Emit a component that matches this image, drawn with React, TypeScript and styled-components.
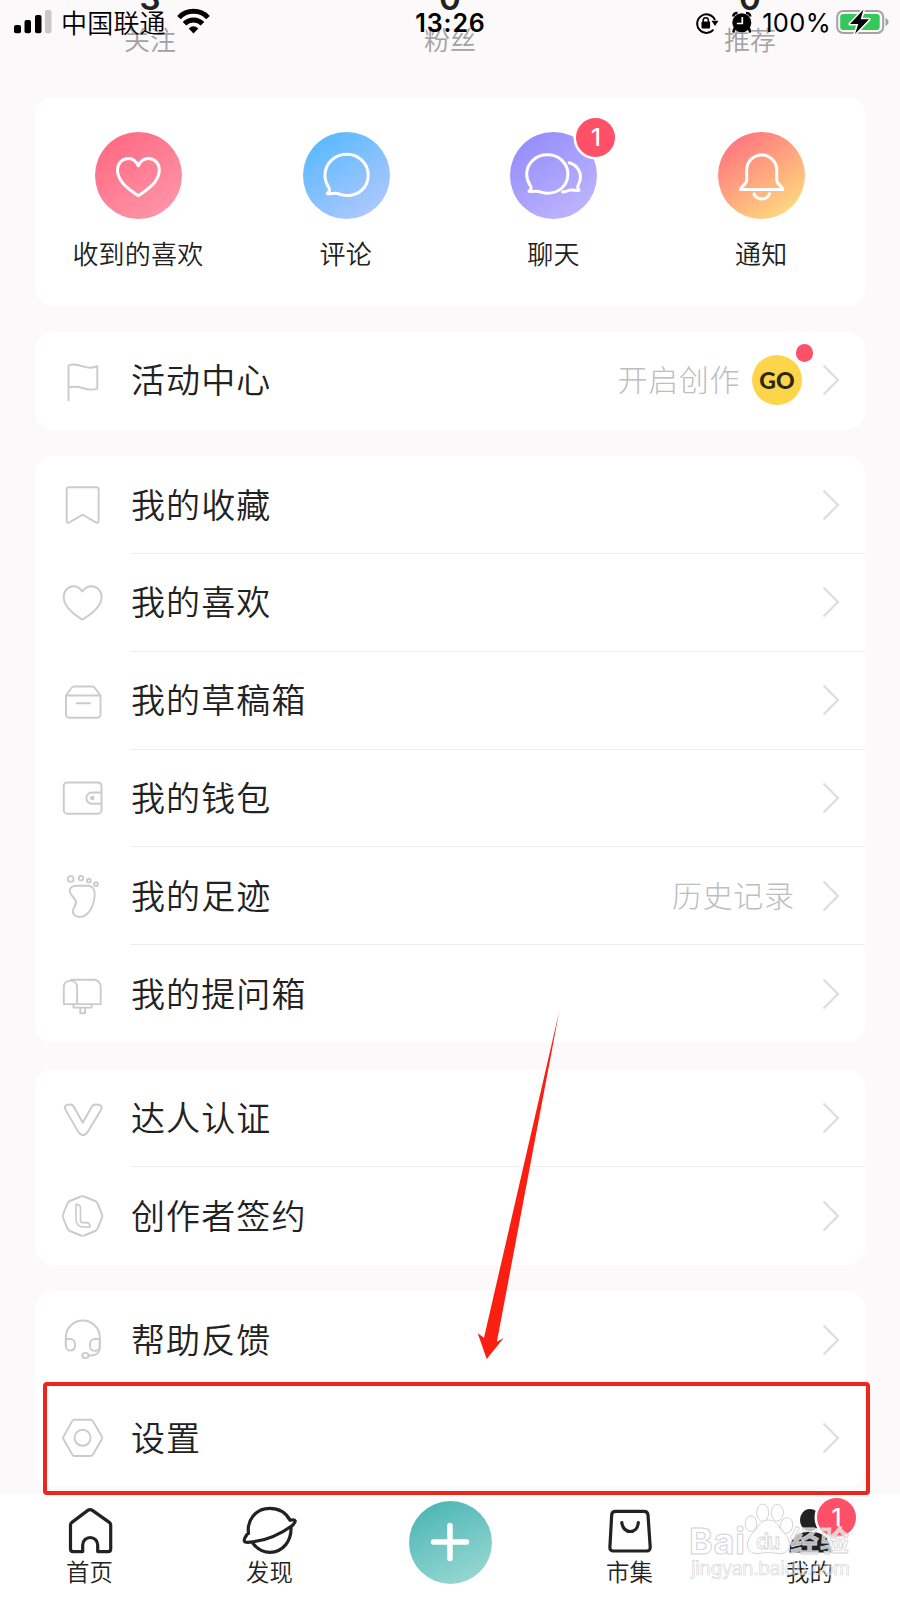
import React from 'react';
import styled, { createGlobalStyle } from 'styled-components';

const GlobalStyle = createGlobalStyle`
  * { box-sizing: border-box; }
  body {
    margin: 0;
    background: #fbf9fa;
    font-family: Inter, 'Noto Sans CJK SC', sans-serif;
    color: #222;
  }
`;

const Screen = styled.div`
  position: relative;
  display: flex;
  flex-direction: column;
  width: 900px;
  height: 1600px;
  overflow: hidden;
  background: #fbf9fa;
`;

/* ---------- Status bar ---------- */

const StatusBar = styled.header`
  position: absolute;
  inset: 0 0 auto 0;
  z-index: 2;
  display: grid;
  grid-template-columns: 1fr auto 1fr;
  align-items: center;
  height: 46px;
  padding: 0 11px 0 14px;
  color: #000;
`;

const StatusGroup = styled.div<{ $end?: boolean }>`
  display: flex;
  align-items: center;
  justify-content: ${(p) => (p.$end ? 'flex-end' : 'flex-start')};
  height: 46px;
`;

const Carrier = styled.span`
  margin: 0 11px 0 9px;
  padding-bottom: 2px;
  font: 350 26px/44px 'Noto Sans CJK SC', sans-serif;
  letter-spacing: 0.2px;
`;

const Clock = styled.span`
  margin-right: 2px;
  font-size: 25px;
  font-weight: 600;
  line-height: 46px;
  letter-spacing: 0.9px;
`;

const BatteryText = styled.span`
  margin: 0 5px 0 9px;
  font-size: 25.500px;
  line-height: 46px;
  letter-spacing: 0.3px;
`;

const RotationIcon = styled.svg`
  margin-right: 12px;
`;

/* ---------- Profile counters ---------- */

const Counters = styled.section`
  display: grid;
  grid-template-columns: repeat(3, 300px);
  flex: none;
  height: 97px;
  overflow: hidden;
`;

const Counter = styled.div`
  display: flex;
  flex-direction: column;
  align-items: center;
  margin-top: -22px;
`;

const CounterValue = styled.strong`
  flex: none;
  font-size: 33px;
  font-weight: 600;
  line-height: 41px;
`;

const CounterLabel = styled.span`
  font: 350 26px/40px 'Noto Sans CJK SC', sans-serif;
  color: #a3a2a3;
`;

/* ---------- Cards ---------- */

const Content = styled.main`
  display: flex;
  flex-direction: column;
  gap: 26.4px;
  flex: none;
  height: 1396.5px;
  padding: 0 35px;
  overflow: hidden;
`;

const Card = styled.section`
  flex: none;
  border-radius: 18px;
  background: #fff;
`;

const ShortcutCard = styled(Card)`
  display: grid;
  grid-template-columns: repeat(4, 207.8px);
  height: 208.6px;
  padding-top: 34.5px;
`;

const Shortcut = styled.div`
  display: flex;
  flex-direction: column;
  align-items: center;
  margin-left: -1px;
`;

const ShortcutDisc = styled.div<{ $from: string; $to: string }>`
  position: relative;
  width: 87px;
  height: 87px;
  border-radius: 50%;
  background: linear-gradient(145deg, ${(p) => p.$from} 12%, ${(p) => p.$to} 88%);
`;

const ShortcutLabel = styled.span`
  margin: 14px 1px 0 0;
  font: 350 26px/40px 'Noto Sans CJK SC', sans-serif;
  letter-spacing: 0.2px;
`;

const Badge = styled.span<{ $top: number; $left: number }>`
  position: absolute;
  top: ${(p) => p.$top}px;
  left: ${(p) => p.$left}px;
  width: 39px;
  height: 39px;
  border-radius: 50%;
  background: #fe5067;
  box-shadow: 0 0 0 2.5px #fff;
  color: #fff;
  font-size: 24px;
  font-weight: 500;
  line-height: 39px;
  text-align: center;
`;

const Row = styled.div`
  display: flex;
  height: 97.8px;
  padding-left: 25px;
`;

const RowIcon = styled.svg`
  flex: none;
  align-self: center;
  width: 44px;
  height: 44px;
  margin-right: 27px;
  fill: none;
  stroke: #cbcbcb;
  stroke-width: 1.9;
  stroke-linejoin: round;
`;

const RowBody = styled.div<{ $line: boolean }>`
  display: flex;
  align-items: center;
  flex: 1;
  padding-right: 25.500px;
  border-bottom: 1px solid ${(p) => (p.$line ? '#ededed' : 'transparent')};
`;

const RowLabel = styled.span`
  flex: 1;
  padding-bottom: 2px;
  font: 350 34px/50px 'Noto Sans CJK SC', sans-serif;
  letter-spacing: 1.1px;
`;

const RowNote = styled.span<{ $gap: number }>`
  margin-right: ${(p) => p.$gap}px;
  padding-bottom: 4px;
  font: 300 30px/44px 'Noto Sans CJK SC', sans-serif;
  letter-spacing: 0.6px;
  color: #bebebe;
`;

const GoBadge = styled.span`
  position: relative;
  width: 50px;
  height: 50px;
  margin-right: 19.500px;
  border-radius: 50%;
  background: #fdd54a;
  color: #2c2812;
  font: 900 23px/51px Lato, sans-serif;
  text-align: center;
`;

const Dot = styled.i`
  position: absolute;
  top: -11px;
  left: 43.5px;
  width: 17.5px;
  height: 17.5px;
  border-radius: 50%;
  background: #fe5067;
`;

/* ---------- Tab bar ---------- */

const TabBar = styled.nav`
  display: grid;
  grid-template-columns: repeat(5, 180px);
  flex: 1;
  background: #fff;
`;

const Tab = styled.div`
  position: relative;
  display: flex;
  flex-direction: column;
  align-items: center;
  padding: 11.5px 1px 0 0;
`;

const TabIcon = styled.svg`
  width: 56px;
  height: 52px;
  fill: none;
  stroke: #222;
  stroke-width: 3.2;
  stroke-linecap: round;
  stroke-linejoin: round;
`;

const TabLabel = styled.span`
  margin-top: -2px;
  font: 350 23.4px/32px 'Noto Sans CJK SC', sans-serif;
`;

const AddButton = styled.div`
  display: grid;
  place-items: center;
  align-self: start;
  justify-self: center;
  width: 83px;
  height: 83px;
  margin-top: 7px;
  border-radius: 50%;
  background: linear-gradient(155deg, #4cb6b5 8%, #97d7d2 90%);
`;

/* ---------- Annotations ---------- */

const Highlight = styled.div`
  position: absolute;
  top: 1381.5px;
  left: 42.5px;
  width: 827px;
  height: 113.5px;
  border: 4px solid #ee251a;
  border-radius: 4px;
`;

const Arrow = styled.svg`
  position: absolute;
  top: 1010px;
  left: 476px;
`;

const Watermark = styled.svg`
  position: absolute;
  top: 1498px;
  left: 684px;
`;

/* ---------- Data ---------- */

const HEART = 'M22.4 10.6C20 7 17 5.3 13.7 5.3 8 5.3 3.7 10 3.7 16c0 9 7.3 15.8 18.7 22.6C33.7 31.8 41.6 25 41.6 16c0-6-4.4-10.7-10.1-10.7-3.8 0-6.8 1.7-9.1 5.3Z';

const icons: Record<string, React.ReactNode> = {
  flag: <path d="M8.5 42.2V6.6c5-2.3 9.5-1 14.4.7s9.400 2.300 14.400-.2V29.600c-5 1.800-9.400 1.200-14.400-.5s-9.400-2-14.400-.5" />,
  bookmark: <path d="M8.800 4.200H36.600a2 2 0 0 1 2 2V38c0 1.700-1.300 2.300-2.700 1.400L22.600 31.700 9.400 39.400c-1.400.9-2.700.3-2.700-1.400V6.200a2 2 0 0 1 2.100-2Z" />,
  heart: <path d={HEART} />,
  drafts: (
    <>
      <path d="M6 16.500 11.500 9c.8-1 1.500-1.500 2.700-1.500H32.200c1.200 0 2 .5 2.700 1.500L40.500 16.500V35.300a3.500 3.500 0 0 1-3.500 3.500H9.500A3.500 3.500 0 0 1 6 35.300ZM6 16.500H40.500" />
      <path d="M16.500 24.200H30" strokeLinecap="round" />
    </>
  ),
  wallet: (
    <>
      <rect x="3.800" y="6.500" width="37.700" height="31.200" rx="3.500" />
      <path d="M41.500 16.500H32a5.600 5.600 0 0 0 0 11.200h9.500" />
      <circle cx="32.300" cy="22" r="1.300" fill="#cbcbcb" />
    </>
  ),
  foot: (
    <>
      <circle cx="10.700" cy="5" r="2.900" />
      <circle cx="21" cy="4.200" r="2.200" />
      <circle cx="28.800" cy="6.600" r="1.900" />
      <circle cx="36" cy="10.200" r="1.900" />
      <path d="M9.900 18c-.8-4 2-6.300 7-6.300H28c5 .3 7 4.500 6.700 9.500C34 32 29 41.300 21.200 42.900c-6.500.9-10-4-7.500-8.400 2.300-4 3.500-6.800 1-9.700C12.300 22.500 10.500 21 9.900 18Z" />
    </>
  ),
  mailbox: (
    <>
      <path d="M3.800 32.100V14.500a6.700 6.700 0 0 1 13.300 0V32.100ZM10.400 7.800H34a6.700 6.700 0 0 1 6.700 6.700V32.100H17" />
      <path d="M13.500 32.100v3.500H31.600V32.100M20.300 35.600v5.600h4.800v-5.600" />
    </>
  ),
  vip: <path d="M5.300 13.400C3.300 9.700 7.300 8.500 9.900 8.500c2 0 3 .5 4.100 2.500l8.700 15.700L31.600 11c1.100-2 2.200-2.500 4.200-2.500 3.600 0 7.400 1.200 5.400 4.900L28 35.400c-3 4.900-7 4.900-10 0Z" />,
  creator: (
    <>
      <path d="M20.900 2.500q1.600-.7 3.200 0l11 4.500q1.700.7 2.400 2.400l4.500 11q.7 1.600 0 3.200l-4.500 11q-.7 1.700-2.400 2.400l-11 4.500q-1.600.7-3.200 0l-11-4.500q-1.700-.7-2.400-2.400L3 23.600q-.7-1.600 0-3.200l4.500-11q.7-1.700 2.400-2.400Z" />
      <path d="M20.500 26.200V14.200c0-2.300-2-3.800-4.500-3.800V25c0 5 3 8 7.200 8H30.200c0-2.900-1.800-4.400-4.500-4.400H23c-1.700 0-2.500-.9-2.500-2.400Z" strokeWidth="1.600" />
    </>
  ),
  headset: (
    <>
      <path d="M5.800 28V19.500a17 17 0 0 1 34 0V28" />
      <path d="M5.800 21H10a5 5 0 0 1 5 5v2a4.600 4.600 0 0 1-9.200 0ZM39.800 21H35a5 5 0 0 0-5 5v2a4.900 4.900 0 0 0 9.800 0Z" />
      <path d="M39.800 28c.2 6.500-2.500 9.500-11.300 9.500" />
      <ellipse cx="25.400" cy="37.500" rx="3.100" ry="2.600" />
    </>
  ),
  settings: (
    <>
      <path d="M14.500 3.700H30.700q1.400 0 2.100 1.200l9.100 15.700q.7 1.300 0 2.600L32.800 38.800q-.7 1.200-2.100 1.200H14.500q-1.400 0-2.100-1.200L3.500 23.200q-.7-1.300 0-2.600L12.400 4.900q.7-1.200 2.100-1.200Z" />
      <circle cx="22.600" cy="21.800" r="8" />
    </>
  ),
};

type Item = { icon: string; label: string; note?: string; go?: boolean };
type Group = { items: Item[]; divided?: boolean };

const groups: Group[] = [
  { items: [{ icon: 'flag', label: '活动中心', note: '开启创作', go: true }] },
  {
    divided: true,
    items: [
      { icon: 'bookmark', label: '我的收藏' },
      { icon: 'heart', label: '我的喜欢' },
      { icon: 'drafts', label: '我的草稿箱' },
      { icon: 'wallet', label: '我的钱包' },
      { icon: 'foot', label: '我的足迹', note: '历史记录' },
      { icon: 'mailbox', label: '我的提问箱' },
    ],
  },
  {
    divided: true,
    items: [
      { icon: 'vip', label: '达人认证' },
      { icon: 'creator', label: '创作者签约' },
    ],
  },
  {
    items: [
      { icon: 'headset', label: '帮助反馈' },
      { icon: 'settings', label: '设置' },
    ],
  },
];

const shortcuts = [
  {
    label: '收到的喜欢',
    from: '#ff6b84',
    to: '#ff94a8',
    art: <path d="M43.300 33.800C41 29 37.500 26.500 33.500 26.500 27.300 26.500 22.500 31.500 22.500 38c0 10 8 17.500 20.800 25.700C56.200 55.500 64.300 48 64.300 38c0-6.500-4.800-11.500-11-11.500-4 0-7.700 2.500-10 7.300Z" />,
  },
  {
    label: '评论',
    from: '#5bb9fe',
    to: '#adc8ff',
    art: <path d="M24.300 61.500C27.500 59 27 57 25.400 54.800 23.300 51.500 22 48 22 43.500 22 31.500 31.500 22.300 43.700 22.300S65.200 31.500 65.200 43.200c0 12-9.200 20.300-21.200 20.300-5 0-8-2-11.500-2.200-2.500-.1-5.500.9-8.200.2Z" />,
  },
  {
    label: '聊天',
    from: '#968efa',
    to: '#bdb4ff',
    badge: true,
    art: (
      <>
        <path d="M19 59.300c2.900-2 2.500-4 1-6.200C18 50 16.700 46.500 16.700 42.300 16.700 31 26 22.800 37.400 22.800S57.900 31 57.900 42.100c0 11.500-9 19.200-20.500 19.200-4.500 0-7.700-1.900-11-2.100-2.500-.1-5 .8-7.400.1Z" />
        <path d="M59.200 30.800c7 1.700 11.300 7.700 11.300 14.200 0 3.300-.8 5.500-2.300 8.200-.8 1.500-.5 3.300.8 5-3 .9-5.500-.4-8-.1-3.200.3-5.500 1.800-8.500 1.900" />
      </>
    ),
  },
  {
    label: '通知',
    from: '#ff7680',
    to: '#ffd87e',
    art: (
      <>
        <path d="M22.500 57.400c0-2.700 6.200-5.400 6.200-8.900V38a15 15 0 0 1 30 0V48.500c0 3.500 6.200 6.200 6.200 8.900Z" />
        <path d="M36 61.800c2.500 6.800 13 6.800 15.600 0" />
      </>
    ),
  },
];

const counters = [
  { value: '3', label: '关注' },
  { value: '0', label: '粉丝' },
  { value: '0', label: '推荐' },
];

const tabs = [
  {
    label: '首页',
    art: <path d="M25.800 5.400q2.300-1.700 4.600 0L47.300 17.400q1.400 1 1.400 2.700V43.900q0 2.700-2.700 2.700H35.700V40a7.500 7.500 0 0 0-15 0v6.600H11.200q-2.700 0-2.700-2.700V20.100q0-1.700 1.400-2.700Z" />,
  },
  {
    label: '发现',
    art: (
      <>
        <path d="M5 29.500C.5 36 1.500 38 8 37.200c13-1.200 29-7 42-16.500 5-4.300 4-6.800-2-5.500C43.500 6.500 36.500 3.300 27.500 3.300 13.500 3.600 4.700 15 6.500 28.500" />
        <path d="M11 38.500C16 45 21.500 47.400 28 47.400 41 47 49.500 36 49 22.500" />
      </>
    ),
  },
  { label: '', art: null },
  {
    label: '市集',
    art: (
      <>
        <path d="M13.500 6.300H42q3.600 0 4 3.600L48.200 42q.2 4-3.600 4H11.500q-3.800 0-3.600-4L9.700 9.900q.3-3.600 3.800-3.600Z" />
        <path d="M19.800 17.500c1.200 12 15.600 12 16.500 0" />
      </>
    ),
  },
  {
    label: '我的',
    art: (
      <g fill="#222" stroke="none">
        <ellipse cx="28" cy="15" rx="10" ry="11" />
        <path d="M7.500 47.500C8 32 15 27 28 27s20 5 21.500 20.500Z" />
      </g>
    ),
  },
];

/* ---------- Views ---------- */

const Chevron = () => (
  <svg width="18" height="32" viewBox="0 0 18 32" fill="none" stroke="#dedede" strokeWidth="2.3">
    <path d="M1.500 1.500 16 16 1.500 30.500" />
  </svg>
);

const SignalBars = () => (
  <svg width="38" height="46" viewBox="0 0 38 46">
    <rect x="0" y="25" width="7" height="8.300" rx="2" />
    <rect x="10.500" y="20" width="6.500" height="13.300" rx="2" />
    <rect x="21" y="15" width="6.500" height="18.300" rx="2" />
    <rect x="31" y="10" width="6.500" height="23.300" rx="2" fill="#c9c7c9" />
  </svg>
);

const Wifi = () => (
  <svg width="34" height="46" viewBox="1 0 34 46" fill="none" stroke="#000" strokeWidth="5">
    <path d="M3 17.600a20 20 0 0 1 29 0M8.500 23.800a12.500 12.500 0 0 1 18 0" />
    <path d="M17.500 33.400 12.700 28.400q4.800-4.400 9.600 0Z" fill="#000" stroke="none" />
  </svg>
);

const RotationLock = () => (
  <RotationIcon width="24" height="46" viewBox="0 0 24 46">
    <path d="M18.500 29.700A9.300 9.300 0 1 1 20 20" fill="none" stroke="#000" strokeWidth="1.900" />
    <path d="M16.500 20.800h7L20 26Z" />
    <rect x="6.500" y="21.500" width="8.600" height="7" rx="1" />
    <path d="M8.200 22v-1.700a2.600 2.600 0 0 1 5.200 0V22" fill="none" stroke="#000" strokeWidth="1.500" />
  </RotationIcon>
);

const Alarm = () => (
  <svg width="22" height="46" viewBox="0 0 22 46">
    <circle cx="10.800" cy="22.800" r="9.500" />
    <path d="M3.500 28.500 2.500 31.500M18 28.500 19 31.500" stroke="#000" strokeWidth="2.500" strokeLinecap="round" />
    <path d="M2.200 16.500a4 4 0 0 1 4.300-3.600M19.300 16.500a4 4 0 0 0-4.300-3.600" fill="none" stroke="#000" strokeWidth="2.500" />
    <path d="M11.300 17v6.500H5.800" fill="none" stroke="#fff" strokeWidth="1.700" />
  </svg>
);

const Battery = () => (
  <svg width="53" height="46" viewBox="0 0 53 46">
    <rect x="1.200" y="11" width="46" height="22" rx="6" fill="none" stroke="#a4a2a4" strokeWidth="2" />
    <rect x="4.200" y="14" width="39.500" height="16" rx="3" fill="#35c759" />
    <path d="M49.500 18c4 1.500 4 6.500 0 8Z" fill="#a4a2a4" />
    <path d="M27.500 9.500 14 24h8.300l-3.300 10L33 19.300h-8.300Z" stroke="#fff" strokeWidth="3.200" paintOrder="stroke" strokeLinejoin="round" />
  </svg>
);

export default function App() {
  return (
    <Screen>
      <GlobalStyle />
      <StatusBar>
        <StatusGroup>
          <SignalBars />
          <Carrier>中国联通</Carrier>
          <Wifi />
        </StatusGroup>
        <Clock>13:26</Clock>
        <StatusGroup $end>
          <RotationLock />
          <Alarm />
          <BatteryText>100%</BatteryText>
          <Battery />
        </StatusGroup>
      </StatusBar>

      <Counters>
        {counters.map((c) => (
          <Counter key={c.label}>
            <CounterValue>{c.value}</CounterValue>
            <CounterLabel>{c.label}</CounterLabel>
          </Counter>
        ))}
      </Counters>

      <Content>
        <ShortcutCard>
          {shortcuts.map((s) => (
            <Shortcut key={s.label}>
              <ShortcutDisc $from={s.from} $to={s.to}>
                <svg width="87" height="87" viewBox="0 0 87 87" fill="none" stroke="#fff" strokeWidth="3" strokeLinecap="round" strokeLinejoin="round">
                  {s.art}
                </svg>
                {s.badge && <Badge $top={-13.5} $left={66}>1</Badge>}
              </ShortcutDisc>
              <ShortcutLabel>{s.label}</ShortcutLabel>
            </Shortcut>
          ))}
        </ShortcutCard>

        {groups.map(({ items, divided }) => (
          <Card key={items[0].label}>
            {items.map((row, i) => (
              <Row key={row.label}>
                <RowIcon viewBox="0 0 44 44">{icons[row.icon]}</RowIcon>
                <RowBody $line={!!divided && i < items.length - 1}>
                  <RowLabel>{row.label}</RowLabel>
                  {row.note && <RowNote $gap={row.go ? 12 : 27}>{row.note}</RowNote>}
                  {row.go && <GoBadge>GO<Dot /></GoBadge>}
                  <Chevron />
                </RowBody>
              </Row>
            ))}
          </Card>
        ))}
      </Content>

      <TabBar>
        {tabs.map((t) =>
          t.art ? (
            <Tab key={t.label}>
              <TabIcon viewBox="0 0 56 52">{t.art}</TabIcon>
              <TabLabel>{t.label}</TabLabel>
              {t.label === '我的' && <Badge $top={4} $left={97}>1</Badge>}
            </Tab>
          ) : (
            <AddButton key="add">
              <svg width="40" height="40" viewBox="0 0 40 40" stroke="#fff" strokeWidth="5.500" strokeLinecap="round">
                <path d="M3.500 20H36.500M20 3.500V36.500" />
              </svg>
            </AddButton>
          ),
        )}
      </TabBar>

      <Highlight />
      <Arrow width="90" height="352" viewBox="0 0 90 352" fill="#fb1f12">
        <path d="M83.300 1 20.900 331.700 27.700 328 10.700 349 1.700 323.300 8 327.700Z" />
      </Arrow>
      <Watermark width="180" height="90" viewBox="0 0 180 90" fill="#fff" fillOpacity="0.7" stroke="#d3d3d6" strokeWidth="1">
        <ellipse cx="67" cy="25.700" rx="5.800" ry="7.800" />
        <ellipse cx="78.700" cy="14.700" rx="6" ry="8.700" />
        <ellipse cx="93.300" cy="14.700" rx="6" ry="8.300" />
        <ellipse cx="102.500" cy="27.500" rx="6.200" ry="7.800" transform="rotate(12 102.500 27.500)" />
        <path d="M84.500 22c6 0 8.500 3.500 11.500 8s9.500 9 9.500 16.500c0 6-4 9-9.500 9-4.500 0-7-1-11.500-1s-7 1-11.500 1c-5.500 0-9.500-3-9.500-9C63.500 39 70 34.500 73 30s5.500-8 11.500-8Z" />
        <g fontFamily="Inter, 'Noto Sans CJK SC', sans-serif">
          <text x="5" y="55.500" fontSize="36" fontWeight="700" textLength="56">Bai</text>
          <text x="72" y="51" fontSize="21" fontWeight="600" textLength="24" strokeWidth="0.800">du</text>
          <text x="106" y="53.500" fontSize="29" fontWeight="700" textLength="59" fontFamily="'Noto Sans CJK SC', sans-serif" strokeWidth="0.800">经验</text>
          <text x="7" y="76.500" fontSize="19" textLength="159" fillOpacity="0.300" strokeWidth="0.600">jingyan.baidu.com</text>
        </g>
      </Watermark>
    </Screen>
  );
}
